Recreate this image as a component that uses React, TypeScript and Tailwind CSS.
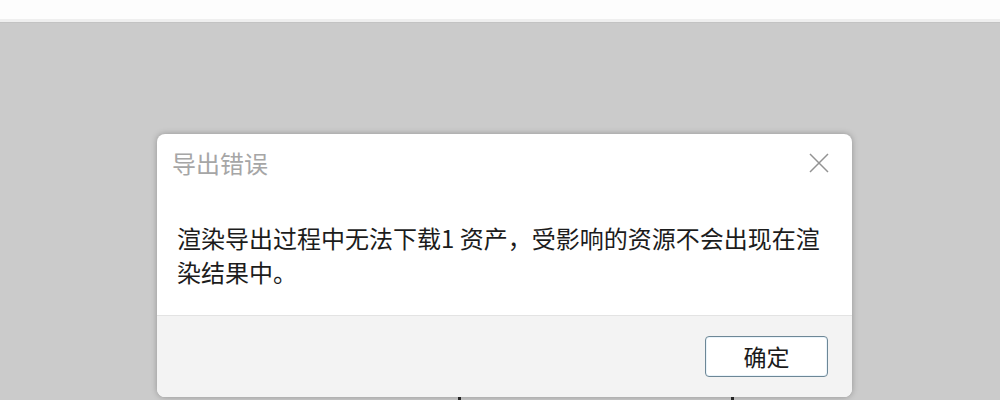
export default function App() {
  return (
    <div
      className="w-[1000px] h-[400px] overflow-hidden bg-[#cbcbcb] flex flex-col"
      style={{ fontFamily: '"Noto Sans CJK SC", "Noto Sans", sans-serif' }}
    >
      <div className="h-[19px] bg-[#fdfdfd]" />
      <div className="h-[3px] bg-[#efefef]" />
      <div className="h-px bg-[#c3c3c3]" />
      <div className="relative flex-1 pt-[111px] pl-[157px]">
        <div className="absolute left-[458px] top-[372px] w-[3px] h-[6px] rounded-sm bg-[#2a2a2a]" />
        <div className="absolute left-[731px] top-[372px] w-[3px] h-[6px] rounded-sm bg-[#2a2a2a]" />
        <div className="relative z-10 w-[695px] h-[263px] rounded-lg bg-white shadow-[0_0_6px_rgba(0,0,0,0.28)] flex flex-col overflow-hidden">
          <div className="flex items-center justify-between pl-[15px] pr-[23px] pt-[13px]">
            <span className="text-[24px] leading-8 text-[#a6a6a6]">导出错误</span>
            <svg width="20" height="20" viewBox="0 0 20 20" className="block">
              <path d="M1 1 L19 19 M19 1 L1 19" stroke="#939393" strokeWidth="1.5" fill="none" />
            </svg>
          </div>
          <div className="pl-5 pr-5 pt-[42px] text-[24px] leading-[33.5px] text-[#1c1c1c] whitespace-nowrap">
            <div>渲染导出过程中无法下载1 资产，受影响的资源不会出现在渲</div>
            <div>染结果中。</div>
          </div>
          <div className="mt-auto h-[82px] border-t border-[#e3e3e3] bg-[#f3f3f3] flex items-center justify-end pr-6">
            <button className="w-[123px] h-[41px] rounded-[4px] border border-[#6d8796] bg-white text-[23px] leading-none text-[#1a1a1a] shadow-[inset_0_0_0_1px_#eaf4fb]">
              确定
            </button>
          </div>
        </div>
      </div>
    </div>
  );
}
